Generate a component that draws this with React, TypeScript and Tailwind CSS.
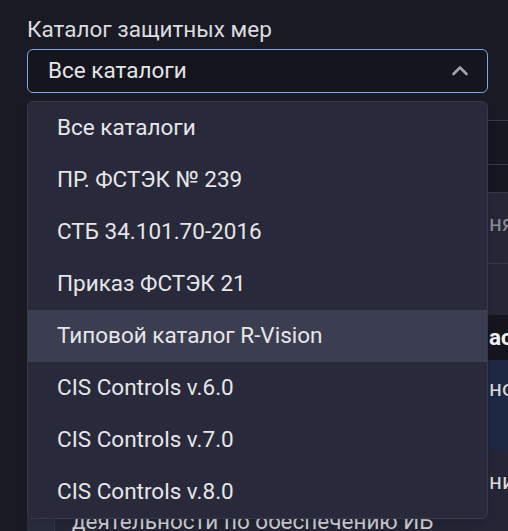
const catalogs = [
  "Все каталоги",
  "ПР. ФСТЭК № 239",
  "СТБ 34.101.70-2016",
  "Приказ ФСТЭК 21",
  "Типовой каталог R-Vision",
  "CIS Controls v.6.0",
  "CIS Controls v.7.0",
  "CIS Controls v.8.0",
];

function ChevronUp() {
  return (
    <svg className="w-[20px] h-[20px] text-[#a3a4aa]" fill="none" stroke="currentColor" viewBox="0 0 20 20">
      <path strokeLinecap="round" strokeLinejoin="round" strokeWidth="2.6" d="M3.5 13l6.5-6.5 6.5 6.5" />
    </svg>
  );
}

function BackgroundTable() {
  return (
    <div className="w-[560px] mt-[8px] flex flex-col text-[22.5px]">
      <div className="h-[20px] border-b border-[#363848]" />
      <div className="h-[44px] bg-[#15161f] border-b border-[#363848]" />
      <div className="h-[28px] bg-[#15161f] border-b border-[#363848]" />
      <div className="h-[71px] bg-[#252737] border-b border-[#363848] flex">
        <div className="w-[462px]" />
        <div className="pt-[14px] text-[#8b8d98]">ня</div>
      </div>
      <div className="h-[51px] bg-[#252737]" />
      <div className="h-[45px] bg-[#14151d] flex items-center">
        <div className="w-[462px]" />
        <div className="font-bold text-[#f2f2f2]">ас</div>
      </div>
      <div className="h-[90px] bg-[#1d2842] flex">
        <div className="w-[462px]" />
        <div className="pt-[12px] text-[#dcdcdc]">но</div>
      </div>
      <div className="h-[90px] bg-[#242636] flex">
        <div className="w-[28px] bg-[#2a2d3e] border-r border-[#363848]" />
        <div className="w-[434px] pl-[17px] pt-[56px] text-[#d2d2d6] leading-[30px] whitespace-nowrap">
          деятельности по обеспечению ИБ
        </div>
        <div className="pt-[15px] text-[#dcdcdc]">ни</div>
      </div>
    </div>
  );
}

export default function App() {
  return (
    <div className="w-[508px] h-[531px] overflow-hidden bg-[#191a24] pl-[27px] pt-[14px] font-['Roboto',sans-serif]">
      <div className="text-[22.5px] leading-[30px] text-[#dcdcdf]">Каталог защитных мер</div>
      <div className="relative mt-[5px]">
        <button className="w-[461px] h-[44px] rounded-[6px] border-[1.5px] border-[#7fa6e6] bg-[#14151d] flex items-center justify-between pl-[20px] pr-[17px]">
          <span className="text-[22.5px] text-[#e4e4e6]">Все каталоги</span>
          <ChevronUp />
        </button>
        <BackgroundTable />
        <div className="absolute top-[52px] left-0 w-[461px] rounded-[6px] border border-[#363949] bg-[#282a3b] shadow-lg overflow-hidden">
          {catalogs.map((c, i) => (
            <div
              key={c}
              className={
                i === 4
                  ? "h-[52px] flex items-center pl-[29px] text-[22.5px] text-[#e6e6e8] bg-[#3b3e51]"
                  : "h-[52px] flex items-center pl-[29px] text-[22.5px] text-[#e6e6e8]"
              }
            >
              {c}
            </div>
          ))}
        </div>
      </div>
    </div>
  );
}
